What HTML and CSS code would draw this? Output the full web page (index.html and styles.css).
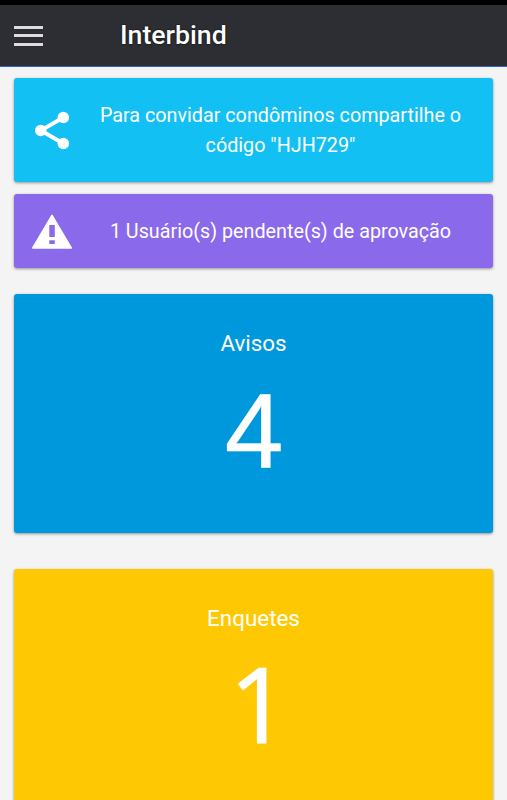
FILE: index.html
```html
<!DOCTYPE html>
<html lang="pt-BR">
<head>
    <meta charset="UTF-8">
    <title>Interbind</title>
    <link rel="stylesheet" href="styles.css">
</head>
<body>
<div class="status"></div>
<header class="topbar">
    <div class="menu">
        <span></span>
        <span></span>
        <span></span>
    </div>
    <h1>Interbind</h1>
</header>
<main>
    <div class="card notice share">
        <svg class="icon" width="44" height="44" viewBox="0 0 44 44">
            <path d="M33.300 9.500 10.800 22.500 33.300 35.500" fill="none" stroke="#fff" stroke-width="4"/>
            <circle cx="33.300" cy="9.500" r="5.800" fill="#fff"/>
            <circle cx="10.800" cy="22.500" r="5.800" fill="#fff"/>
            <circle cx="33.300" cy="35.500" r="5.800" fill="#fff"/>
        </svg>
        <p>Para convidar condôminos compartilhe o código "HJH729"</p>
    </div>
    <div class="card notice pending">
        <svg class="icon" width="44" height="44" viewBox="0 0 44 44">
            <path d="M22 6.500 41.200 39H2.800z" fill="#fff" stroke="#fff" stroke-width="1.600" stroke-linejoin="round"/>
            <path d="M19.300 16h5.500v12h-5.500zM19.300 31.300h5.500v3.700h-5.500z" fill="#8a6aea"/>
        </svg>
        <p>1 Usuário(s) pendente(s) de aprovação</p>
    </div>
    <div class="card total avisos">
        <h2>Avisos</h2>
        <strong>4</strong>
    </div>
    <div class="card total enquetes">
        <h2>Enquetes</h2>
        <strong>1</strong>
    </div>
</main>
</body>
</html>
```

FILE: styles.css
```css
* {
    margin: 0;
    padding: 0;
    box-sizing: border-box;
}
body {
    height: 800px;
    overflow: hidden;
    background-color: #f4f4f4;
    font-family: Roboto, "Liberation Sans", sans-serif;
    color: #fff;
}
.status {
    height: 5px;
    background-color: #000;
}
.topbar {
    display: flex;
    align-items: center;
    height: 62px;
    padding: 0 14px;
    background-color: #2d2e33;
    border-bottom: 1px solid #2f62d0;
}
.menu {
    display: flex;
    flex-direction: column;
    gap: 5.500px;
    width: 29px;
}
.menu span {
    height: 3px;
    background-color: #dfdcdf;
    box-shadow: 0 0 1px rgba(0, 0, 0, .8);
}
h1 {
    margin: -2px 0 0 77px;
    font-size: 26.700px;
    line-height: 32px;
    font-weight: 500;
    text-shadow: 0 0 2px #000;
}
main {
    padding: 11px 14px 0;
}
.card {
    border-radius: 3px;
    box-shadow: 0 1px 3px rgba(0, 0, 0, .4);
}
.notice {
    display: flex;
    align-items: center;
    margin-bottom: 12px;
    padding: 0 16px;
}
.notice .icon {
    flex: none;
}
.notice p {
    flex: 1;
    padding: 1px 0 0 10px;
    font-size: 19.750px;
    line-height: 30px;
    text-align: center;
}
.share {
    height: 104px;
    background-color: #12c0f4;
}
.pending {
    height: 74px;
    background-color: #8a6aea;
}
.total {
    height: 239px;
    text-align: center;
}
.total h2 {
    font-size: 22.400px;
    line-height: 30px;
    font-weight: 400;
}
.total strong {
    display: block;
    margin-top: 13px;
    padding-left: 1px;
    font: 400 105.500px/120px "Liberation Sans", sans-serif;
    -webkit-text-stroke: .5px #fff;
}
.avisos {
    margin-top: 26px;
    padding-top: 34px;
    background-color: #0098dc;
}
.enquetes {
    margin-top: 35.600px;
    padding-top: 34px;
    background-color: #fec902;
}
/* plain "1", without the foot serif */
.enquetes strong {
    margin-top: 10px;
    padding-left: 11px;
    font-family: "Open Sans", sans-serif;
    font-size: 104px;
    -webkit-text-stroke: 1.200px #fff;
}
```
